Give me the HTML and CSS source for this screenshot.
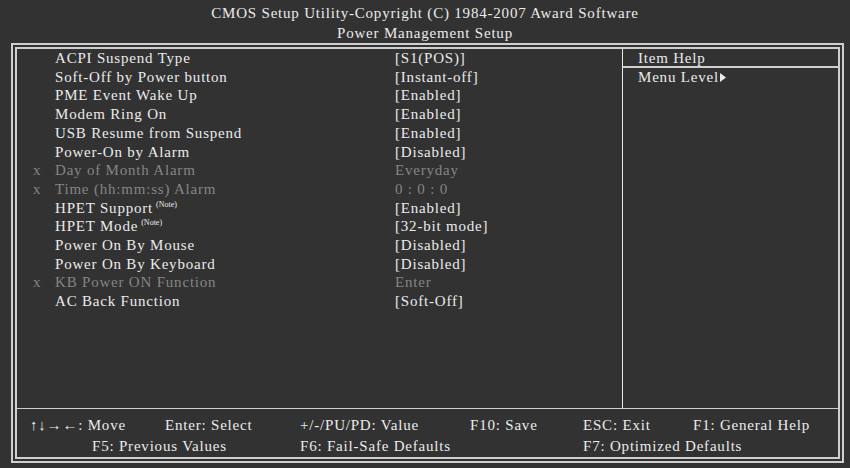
FILE: index.html
```html
<!DOCTYPE html>
<html lang="en">
<head>
    <meta charset="UTF-8">
    <title>Power Management Setup</title>
    <link rel="stylesheet" href="styles.css">
</head>
<body>

    <div class="title">
        <div>CMOS Setup Utility-Copyright (C) 1984-2007 Award Software</div>
        <div>Power Management Setup</div>
    </div>

    <div class="frame">
        <div class="main">
            <div class="items">
                <div class="row"><span class="mark"></span><span>ACPI Suspend Type</span><span>[S1(POS)]</span></div>
                <div class="row"><span class="mark"></span><span>Soft-Off by Power button</span><span>[Instant-off]</span></div>
                <div class="row"><span class="mark"></span><span>PME Event Wake Up</span><span>[Enabled]</span></div>
                <div class="row"><span class="mark"></span><span>Modem Ring On</span><span>[Enabled]</span></div>
                <div class="row"><span class="mark"></span><span>USB Resume from Suspend</span><span>[Enabled]</span></div>
                <div class="row"><span class="mark"></span><span>Power-On by Alarm</span><span>[Disabled]</span></div>
                <div class="row off"><span class="mark">x</span><span>Day of Month Alarm</span><span>Everyday</span></div>
                <div class="row off"><span class="mark">x</span><span>Time (hh:mm:ss) Alarm</span><span>0 : 0 : 0</span></div>
                <div class="row"><span class="mark"></span><span>HPET Support<sup>(Note)</sup></span><span>[Enabled]</span></div>
                <div class="row"><span class="mark"></span><span>HPET Mode<sup>(Note)</sup></span><span>[32-bit mode]</span></div>
                <div class="row"><span class="mark"></span><span>Power On By Mouse</span><span>[Disabled]</span></div>
                <div class="row"><span class="mark"></span><span>Power On By Keyboard</span><span>[Disabled]</span></div>
                <div class="row off"><span class="mark">x</span><span>KB Power ON Function</span><span>Enter</span></div>
                <div class="row"><span class="mark"></span><span>AC Back Function</span><span>[Soft-Off]</span></div>
            </div>
            <div class="help">
                <div class="help-title">Item Help</div>
                <div class="help-body">Menu Level<svg class="tri" width="6" height="9" viewBox="0 0 6 9"><path d="M0 0 L6 4.5 L0 9 Z" fill="#ebebeb"/></svg></div>
            </div>
        </div>
        <div class="keys">
            <span>&uarr;&darr;&rarr;&larr;: Move</span>
            <span>Enter: Select</span>
            <span>+/-/PU/PD: Value</span>
            <span>F10: Save</span>
            <span>ESC: Exit</span>
            <span>F1: General Help</span>
            <span class="k-f5">F5: Previous Values</span>
            <span class="k-f6">F6: Fail-Safe Defaults</span>
            <span class="k-f7">F7: Optimized Defaults</span>
        </div>
    </div>

</body>
</html>
```

FILE: styles.css
```css
body {
    margin: 0;
    width: 850px;
    height: 468px;
    background-color: #323232;
    color: #ebebeb;
    font-family: "Liberation Serif", "Times New Roman", serif;
    font-size: 15px;
    letter-spacing: 0.8px;
    overflow: hidden;
}
.title {
    height: 43px;
    padding-top: 4px;
    box-sizing: border-box;
    text-align: center;
    line-height: 19.5px;
}
.frame {
    margin-left: 11px;
    width: 833px;
    height: 420px;
    box-sizing: border-box;
    border: 6px double #cfcfcf;
    display: flex;
    flex-direction: column;
}
.main {
    flex: 1;
    display: flex;
    border-bottom: 1px solid #cfcfcf;
}
.items {
    width: 605px;
    border-right: 1px solid #ebebeb;
}
.row {
    display: grid;
    grid-template-columns: 38px 340px auto;
    line-height: 18.7px;
}
.mark {
    padding-left: 16px;
}
.off {
    color: #858585;
}
sup {
    font-size: 8px;
    letter-spacing: 0;
    margin-left: 3px;
    vertical-align: 6px;
    line-height: 0;
}
.help {
    flex: 1;
}
.help-title {
    padding: 2px 0 0 15px;
    line-height: 15px;
    border-bottom: 2px solid #cfcfcf;
}
.help-body {
    padding: 0 0 0 15px;
    line-height: 18.7px;
}
.tri {
    margin-left: 1px;
}
.keys {
    height: 48px;
    padding: 7px 0 0 13px;
    box-sizing: border-box;
    display: grid;
    grid-template-columns: 135px 135px 170px 113px 110px auto;
    line-height: 18.5px;
}
.k-f5 {
    grid-column: 1 / 3;
    padding-left: 62px;
}
.k-f6 {
    grid-column: 3 / 5;
}
.k-f7 {
    grid-column: 5 / 7;
}
```
